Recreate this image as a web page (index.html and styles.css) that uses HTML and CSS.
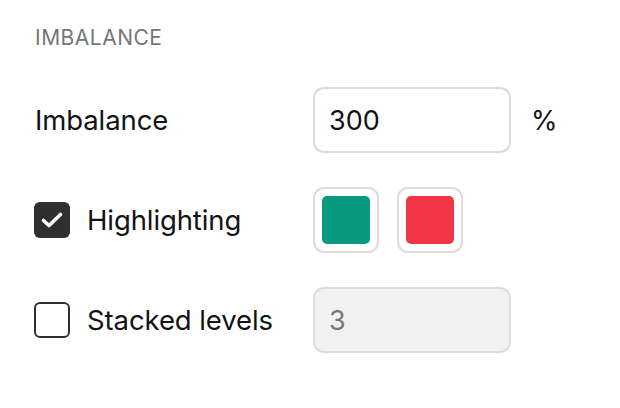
FILE: index.html
```html
<!DOCTYPE html>
<html>
<head>
<meta charset="utf-8">
<link rel="stylesheet" href="styles.css">
</head>
<body>
<div class="panel">
  <div class="section-title">IMBALANCE</div>
  <div class="row">
    <div class="label">Imbalance</div>
    <div class="controls">
      <div class="input">300</div>
      <span class="unit">%</span>
    </div>
  </div>
  <div class="row">
    <div class="label">
      <span class="checkbox checked">
        <svg width="36" height="36" viewBox="0 0 36 36"><path d="M9.5 18.5 L15 23.5 L26.5 12.5" fill="none" stroke="#fff" stroke-width="3.6" stroke-linecap="round" stroke-linejoin="round"/></svg>
      </span>
      <span>Highlighting</span>
    </div>
    <div class="controls">
      <div class="swatch"><span class="color green"></span></div>
      <div class="swatch"><span class="color red"></span></div>
    </div>
  </div>
  <div class="row">
    <div class="label">
      <span class="checkbox"></span>
      <span>Stacked levels</span>
    </div>
    <div class="controls">
      <div class="input disabled">3</div>
    </div>
  </div>
</div>
</body>
</html>
```
FILE: styles.css
```css
html, body {
  margin: 0;
  padding: 0;
  background: #ffffff;
}
body {
  font-family: Inter, "Noto Sans", sans-serif;
  color: #131313;
}
.panel {
  padding: 26px 0 0 35px;
  display: flex;
  flex-direction: column;
}
.section-title {
  font-size: 21px;
  line-height: 24px;
  color: #767676;
  letter-spacing: 0.5px;
  margin-bottom: 37px;
}
.row {
  display: flex;
  align-items: center;
  height: 66px;
  margin-bottom: 34px;
}
.label {
  width: 278px;
  flex: none;
  display: flex;
  align-items: center;
  gap: 17px;
  font-size: 27.5px;
  letter-spacing: -0.1px;
}
.controls {
  display: flex;
  align-items: center;
  gap: 18px;
}
.input {
  box-sizing: border-box;
  width: 198px;
  height: 66px;
  border: 2px solid #dcdcdc;
  border-radius: 11px;
  padding: 0 14px;
  display: flex;
  align-items: center;
  font-size: 27px;
}
.input.disabled {
  background: #f1f1f1;
  color: #777777;
}
.unit {
  margin-left: 2px;
  font-size: 27px;
}
.checkbox {
  box-sizing: border-box;
  width: 36px;
  height: 36px;
  margin-left: -1px;
  border: 2px solid #2f2f2f;
  border-radius: 6px;
  display: flex;
  align-items: center;
  justify-content: center;
  flex: none;
}
.checkbox.checked {
  border: none;
  background: #2f2f2f;
}
.swatch {
  box-sizing: border-box;
  width: 66px;
  height: 66px;
  border: 2px solid #dcdcdc;
  border-radius: 11px;
  padding: 7px;
  display: flex;
}
.color {
  flex: 1;
  border-radius: 5px;
}
.green { background: #089981; }
.red { background: #f23645; }
```
